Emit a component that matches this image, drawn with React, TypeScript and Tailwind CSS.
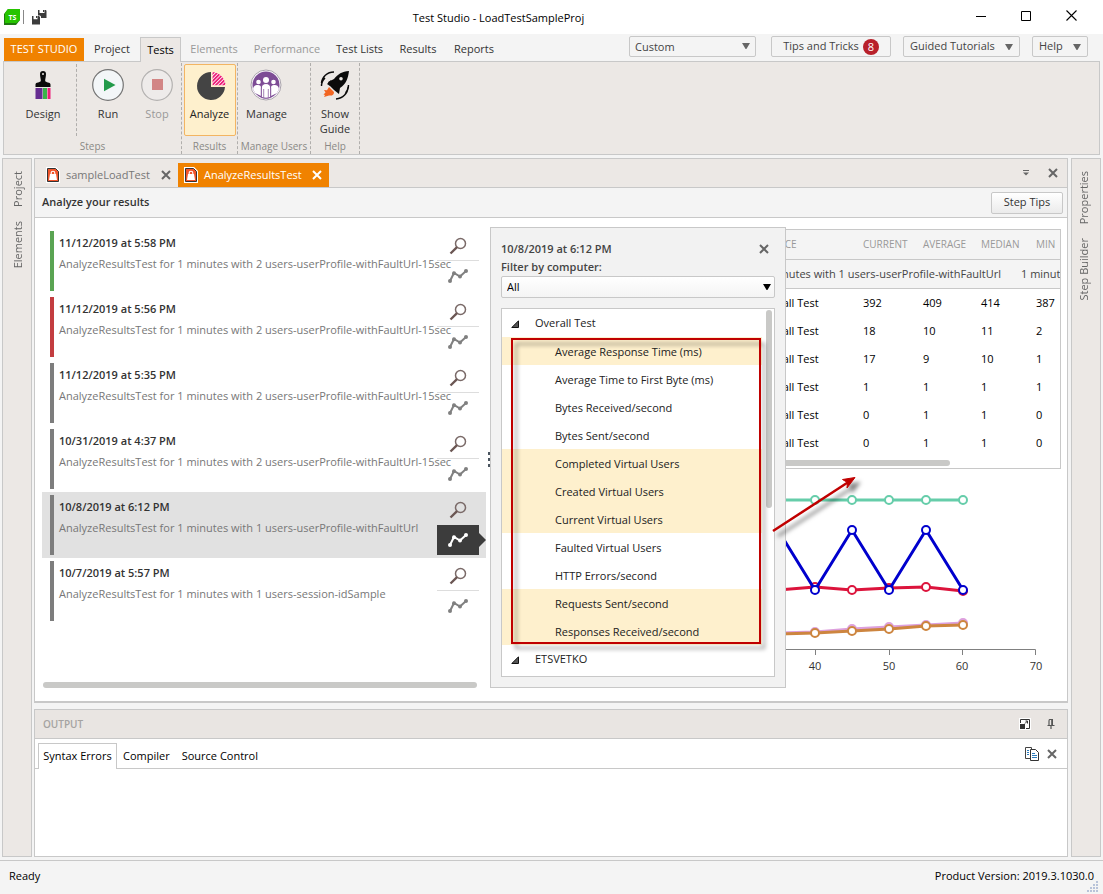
import type { ReactNode } from "react";

const runs = [
  { id: 1, date: "11/12/2019 at 5:58 PM", text: "AnalyzeResultsTest for 1 minutes with 2 users-userProfile-withFaultUrl-15sec", bar: "bg-[#5aa453]" },
  { id: 2, date: "11/12/2019 at 5:56 PM", text: "AnalyzeResultsTest for 1 minutes with 2 users-userProfile-withFaultUrl-15sec", bar: "bg-[#c33d40]" },
  { id: 3, date: "11/12/2019 at 5:35 PM", text: "AnalyzeResultsTest for 1 minutes with 2 users-userProfile-withFaultUrl-15sec", bar: "bg-[#7d7d7d]" },
  { id: 4, date: "10/31/2019 at 4:37 PM", text: "AnalyzeResultsTest for 1 minutes with 2 users-userProfile-withFaultUrl-15sec", bar: "bg-[#7d7d7d]" },
  { id: 5, date: "10/8/2019 at 6:12 PM", text: "AnalyzeResultsTest for 1 minutes with 1 users-userProfile-withFaultUrl", bar: "bg-[#7d7d7d]", selected: true },
  { id: 6, date: "10/7/2019 at 5:57 PM", text: "AnalyzeResultsTest for 1 minutes with 1 users-session-idSample", bar: "bg-[#7d7d7d]" },
];

const metrics: [string, boolean][] = [
  ["Average Response Time (ms)", true],
  ["Average Time to First Byte (ms)", false],
  ["Bytes Received/second", false],
  ["Bytes Sent/second", false],
  ["Completed Virtual Users", true],
  ["Created Virtual Users", true],
  ["Current Virtual Users", true],
  ["Faulted Virtual Users", false],
  ["HTTP Errors/second", false],
  ["Requests Sent/second", true],
  ["Responses Received/second", true],
];

const tableRows = [
  [392, 409, 414, 387],
  [18, 10, 11, 2],
  [17, 9, 10, 1],
  [1, 1, 1, 1],
  [0, 1, 1, 0],
  [0, 1, 1, 0],
];

function Down({ className = "text-[#666]" }: { className?: string }) {
  return (
    <svg width="8" height="6" viewBox="0 0 8 6" className={className} aria-hidden="true">
      <path d="M0 0h8L4.4 6h-.8z" fill="currentColor" />
    </svg>
  );
}

function Cross({ className = "text-[#666]" }: { className?: string }) {
  return (
    <svg width="10" height="10" viewBox="0 0 10 10" className={className} aria-hidden="true">
      <path d="M1 1l8 8M9 1l-8 8" stroke="currentColor" strokeWidth="2" fill="none" />
    </svg>
  );
}

function TestIcon() {
  return (
    <svg width="14" height="16" viewBox="0 0 14 16" aria-hidden="true">
      <path d="M0 0h10l4 4v12H0z" fill="#fff" />
      <path d="M1.500 1.500h8l3 3v10h-11z" fill="#f1552b" stroke="#333" />
      <path d="M4 7h6l1 6H3z" fill="#fff" />
      <path d="M5.200 7.500V6a1.800 1.800 0 013.600 0v1.500" fill="none" stroke="#fff" strokeWidth="1.100" />
    </svg>
  );
}

function LogoIcon() {
  return (
    <svg width="16" height="16" viewBox="0 0 16 16" aria-hidden="true">
      <path d="M4 0h12v11l-4 5H0V5z" fill="#1f7a10" />
      <path d="M4 0h12v11l-3.500 3H1V4z" fill="#27c400" />
      <text x="8.500" y="10.500" fontSize="7" fontWeight="700" fill="#fff" textAnchor="middle">TS</text>
    </svg>
  );
}

function SaveAllIcon() {
  return (
    <svg width="15" height="15" viewBox="0 0 15 15" fill="#3c3c3c" aria-hidden="true">
      <path d="M6 0h1.500v3h5V0H14l.5 1v7H9V6.500L8 5.500H6z" />
      <path d="M11 0h1.200v2H11z" />
      <path d="M0 6h1.500v3.200h4V6H7l1 1v7.500H0z" />
      <path d="M4 6h1.200v2H4z" />
    </svg>
  );
}

function BrushIcon() {
  return (
    <svg width="32" height="32" viewBox="0 0 32 32" className="shrink-0" aria-hidden="true">
      <path d="M16 2c2 0 3 1 3 3 0 3-1 5-.8 7 .3 1.600 5.300 1 5.300 3.500V18h-15v-2.500c0-2.500 5-1.900 5.300-3.500C14 10 13 8 13 5c0-2 1-3 3-3z" fill="#0b0b0b" />
      <circle cx="16" cy="5" r="1" fill="#eae6e3" />
      <path d="M8.500 19h7v11h-7z" fill="#662d91" />
      <path d="M16 19h4v11h-4z" fill="#39b54a" />
      <path d="M20.500 19h3v11h-3z" fill="#ed1e79" />
    </svg>
  );
}

function RunIcon() {
  return (
    <svg width="32" height="32" viewBox="0 0 32 32" className="shrink-0" aria-hidden="true">
      <circle cx="16" cy="16" r="15.300" fill="#f3f6f8" stroke="#747474" strokeWidth="1.200" />
      <path d="M12 9.700L23.500 16 12 22.300z" fill="#229a4a" />
    </svg>
  );
}

function StopIcon() {
  return (
    <svg width="32" height="32" viewBox="0 0 32 32" className="shrink-0" aria-hidden="true">
      <circle cx="16" cy="16" r="15.300" fill="#eeebea" stroke="#b3b1b0" strokeWidth="1.200" />
      <path d="M11 10h11v11H11z" fill="#d28585" />
    </svg>
  );
}

function PieIcon() {
  return (
    <svg width="32" height="32" viewBox="0 0 32 32" className="shrink-0" aria-hidden="true">
      <defs>
        <pattern id="hatch" width="2.600" height="2.600" patternUnits="userSpaceOnUse" patternTransform="rotate(45)">
          <path d="M0 0h1.800v2.600H0z" fill="#ed1e79" />
        </pattern>
      </defs>
      <path d="M17 3a14 14 0 1014 15H17z" fill="#444" />
      <path d="M18.500 3A14 14 0 0131.500 16.300H18.500z" fill="#fff" />
      <path d="M18.500 3A14 14 0 0131.500 16.300H18.500z" fill="url(#hatch)" />
    </svg>
  );
}

function UsersIcon() {
  return (
    <svg width="32" height="32" viewBox="0 0 32 32" className="shrink-0" aria-hidden="true">
      <defs>
        <clipPath id="users-disc"><circle cx="16" cy="16" r="13.500" /></clipPath>
      </defs>
      <circle cx="16" cy="16" r="15" fill="#fff" stroke="#a9a3ac" strokeWidth="1" />
      <circle cx="16" cy="16" r="13.500" fill="#7d4c95" />
      <g fill="#fff" clipPath="url(#users-disc)">
        <circle cx="8.500" cy="13" r="2.300" />
        <circle cx="23.500" cy="13" r="2.300" />
        <path d="M3 21c0-4 2-5 5-5 2 0 3 1 3 2.500V27l-6-3zM29 21c0-4-2-5-5-5-2 0-3 1-3 2.500V27l6-3z" />
      </g>
      <circle cx="16" cy="11" r="3" fill="#fff" />
      <path d="M11.300 28.300V19c0-3 2-4.500 4.700-4.500s4.700 1.500 4.700 4.500v9.300c-3 1.200-6.400 1.200-9.400 0z" fill="#fff" stroke="#7d4c95" />
      <path d="M13.700 20v9M18.300 20v9" stroke="#7d4c95" strokeWidth="0.700" />
    </svg>
  );
}

function RocketIcon() {
  return (
    <svg width="32" height="32" viewBox="0 0 32 32" className="shrink-0" aria-hidden="true">
      <path d="M15 3C8 3 3 8 2.500 14M6 9c-2 2-3.500 5-3.500 8M29 18c0 6-5 11.500-12 12M26.500 24c2-2 3-5 3-8" fill="none" stroke="#0b0b0b" strokeWidth="1.400" />
      <path d="M30 2c-1 8-3 13-9 17l-1 6-5-4-4-4-2-4 6-3C19 5 23 2.500 30 2z" fill="#0b0b0b" />
      <path d="M8 15l4-4 1 3-2 3z" fill="#0b0b0b" />
      <circle cx="22" cy="9.700" r="1.800" fill="#eae6e3" />
      <path d="M10 18l5 5c0 3-2 4-5 3.500L5 28l1-2-1.500-.5 2-2L5 21l3 .3z" fill="#f26522" />
    </svg>
  );
}

function MagnifierIcon() {
  return (
    <svg width="18" height="18" viewBox="0 0 18 18" aria-hidden="true">
      <circle cx="11.500" cy="6.500" r="5" fill="none" stroke="#7a6a68" strokeWidth="1.500" />
      <path d="M8 10.200L1.500 16.500" stroke="#6b5653" strokeWidth="2.400" />
    </svg>
  );
}

function TrendIcon() {
  return (
    <svg width="20" height="14" viewBox="0 0 20 14" aria-hidden="true">
      <path d="M2 12L6 4l6 3.500L18 2" fill="none" stroke="currentColor" strokeWidth="2" />
      <circle cx="2" cy="12" r="2" fill="currentColor" />
      <circle cx="6" cy="4.200" r="2" fill="currentColor" />
      <circle cx="12" cy="7.400" r="2" fill="currentColor" />
      <circle cx="18" cy="2" r="2" fill="currentColor" />
    </svg>
  );
}

function RibbonButton({ icon, children, state = "" }: { icon: ReactNode; children: ReactNode; state?: string }) {
  return (
    <button className={`flex flex-col items-center rounded-[2px] border pt-1 leading-[15px] ${state || "border-transparent text-[#333]"}`}>
      {icon}
      <span className="mt-[5px] text-center">{children}</span>
    </button>
  );
}

function RibbonGroup({ label, children, className }: { label: string; children: ReactNode; className: string }) {
  return (
    <section aria-label={label} className={`flex shrink-0 flex-col border-r border-dashed border-[#b0aeac] ${className}`}>
      <div className="flex h-[74px] py-px">{children}</div>
      <div className="mt-[2px] text-center text-[10px] leading-[14px] whitespace-nowrap text-[#8a8886]">{label}</div>
    </section>
  );
}

function RunItem({ run }: { run: (typeof runs)[number] }) {
  return (
    <li className={`relative flex h-[66px] py-[3px] pr-[7px] pl-2 ${run.selected ? "bg-[#e1e1e1]" : ""}`}>
      <div className={`w-1 shrink-0 ${run.bar}`} />
      <div className="min-w-0 flex-1 pt-[5px] pl-[5px] whitespace-nowrap">
        <h3 className="leading-[14px] font-semibold text-[#333]">{run.date}</h3>
        <p className="mt-[7px] leading-[14px] text-[#777]">{run.text}</p>
      </div>
      <div className="flex w-[42px] shrink-0 flex-col">
        <button aria-label="Inspect" className="flex h-[29px] items-center justify-center">
          <MagnifierIcon />
        </button>
        <button
          aria-label="Chart"
          className={`flex items-center justify-center ${run.selected ? "mt-px h-[30px] bg-[#3c3c3c] text-white" : "h-[31px] border-t border-[#ddd] text-[#808080]"}`}
        >
          <TrendIcon />
        </button>
      </div>
      {run.selected && (
        <svg width="7" height="14" viewBox="0 0 7 14" className="absolute right-0 bottom-[11px]" aria-hidden="true">
          <path d="M0 0l7 7-7 7z" fill="#3c3c3c" />
        </svg>
      )}
    </li>
  );
}

function Series({ points, color }: { points: [number, number][]; color: string }) {
  return (
    <g stroke={color}>
      <polyline points={points.map((p) => p.join(",")).join(" ")} fill="none" strokeWidth="3" />
      {points.map(([x, y]) => (
        <circle key={x} cx={x} cy={y} r="4" fill="#fff" strokeWidth="2" />
      ))}
    </g>
  );
}

function Chart() {
  return (
    <svg width="570" height="200" viewBox="490 480 570 200" className="shrink-0 self-end" role="img" aria-label="Performance chart">
      <Series color="#66cdaa" points={[[777, 500], [814, 500], [851, 500], [888, 500], [925, 500], [962, 500]]} />
      <Series color="#dc143c" points={[[777, 590], [814, 587], [851, 590], [888, 588], [925, 587], [962, 591]]} />
      <Series color="#0000cd" points={[[777, 530], [814, 590], [851, 530], [888, 590], [925, 530], [962, 590]]} />
      <Series color="#dda0dd" points={[[777, 633], [814, 632], [851, 629], [888, 627], [925, 625], [962, 623]]} />
      <Series color="#cd853f" points={[[777, 634], [814, 633], [851, 631], [888, 629], [925, 626], [962, 625]]} />
      <path d="M520 649.500H1034.500V655M814.500 649.500V655M888.500 649.500V655M961.500 649.500V655" fill="none" stroke="#808080" />
      <g fontSize="11" fill="#333" textAnchor="middle">
        <text x="814" y="670">40</text>
        <text x="888" y="670">50</text>
        <text x="961" y="670">60</text>
        <text x="1035" y="670">70</text>
      </g>
    </svg>
  );
}

function ResultsTable() {
  return (
    <div className="ml-[7px] overflow-hidden border border-[#c8c8c8] bg-white">
      <table className="w-full table-fixed border-collapse text-left whitespace-nowrap">
        <colgroup>
          <col />
          <col className="w-[105px]" />
          <col className="w-[60px]" />
          <col className="w-[58px]" />
          <col className="w-[55px]" />
          <col className="w-[24px]" />
        </colgroup>
        <thead>
          <tr className="h-[29px] border-b border-[#c8c8c8] bg-[#f4f4f4] text-[10px] text-[#999]">
            <th className="font-normal" />
            {["SOURCE", "CURRENT", "AVERAGE", "MEDIAN", "MIN"].map((h) => (
              <th key={h} className="font-normal">{h}</th>
            ))}
          </tr>
        </thead>
        <tbody>
          <tr className="h-[29px] border-b border-[#c8c8c8] bg-[#f4f4f4] text-[#444]">
            <td colSpan={6} className="pt-[2px]">
              <div className="flex justify-end gap-5 overflow-hidden">
                <span>AnalyzeResultsTest for 1 minutes with 1 users-userProfile-withFaultUrl</span>
                <span className="w-[39px]">1 minutes</span>
              </div>
            </td>
          </tr>
          {tableRows.map((row, i) => (
            <tr key={i} className="h-7 text-black">
              <td />
              <td className="pt-[2px]">Overall Test</td>
              {row.map((value, j) => (
                <td key={j} className="pt-[2px]">{value}</td>
              ))}
            </tr>
          ))}
        </tbody>
      </table>
      <div className="mt-1 mb-[2px] h-[6px] w-[452px] rounded-full bg-[#c9c9c7]" />
    </div>
  );
}

function TreeNode({ label }: { label: string }) {
  return (
    <button className="flex h-7 w-full items-center gap-4 pt-px pl-[9px] text-left">
      <svg width="8" height="8" viewBox="0 0 8 8" aria-hidden="true">
        <path d="M7.500.8v6.700H.8z" fill="#555" stroke="#111" />
      </svg>
      {label}
    </button>
  );
}

function FilterPanel() {
  return (
    <div className="absolute top-[9px] left-0 w-[296px] border border-[#c8c8c8] bg-[#f2f2f2] px-[10px] pt-[13px] pb-[10px]">
      <div className="flex items-center justify-between pr-[6px]">
        <h2 className="leading-[16px] font-semibold text-[#444]">10/8/2019 at 6:12 PM</h2>
        <button aria-label="Close filter"><Cross /></button>
      </div>
      <label htmlFor="computer" className="mt-[2px] block leading-[16px] font-semibold text-[#444]">Filter by computer:</label>
      <div className="relative mt-px">
        <select id="computer" className="block h-[22px] w-full appearance-none rounded-[2px] border border-[#c8c8c8] bg-linear-to-b from-[#fff] to-[#f4f4f4] px-[5px] text-black">
          <option>All</option>
        </select>
        <Down className="pointer-events-none absolute top-2 right-1 text-black" />
      </div>
      <div className="relative mt-[10px] h-[369px] border border-[#c8c8c8] bg-white text-[#222]">
        <TreeNode label="Overall Test" />
        <ul>
          {metrics.map(([name, on]) => (
            <li key={name}>
              <button aria-pressed={on} className={`block h-7 w-[260px] pt-[2px] pl-[53px] text-left ${on ? "bg-[#fef0cd]" : ""}`}>{name}</button>
            </li>
          ))}
        </ul>
        <TreeNode label="ETSVETKO" />
        <div className="absolute top-px right-[2px] h-[198px] w-[6px] rounded-full bg-[#c9c9c7]" />
        <div className="pointer-events-none absolute top-[29px] left-[9px] h-[306px] w-[250px] border-2 border-[#c00000] drop-shadow-[4px_5px_2px_rgba(0,0,0,0.4)]" />
      </div>
      <svg width="100" height="80" viewBox="0 0 100 80" className="pointer-events-none absolute top-[242px] left-[277px] z-10 drop-shadow-[5px_5px_2px_rgba(0,0,0,0.5)]" aria-hidden="true">
        <path d="M5 61L82 11" stroke="#c00000" strokeWidth="2.500" />
        <path d="M87 7.500L74.500 9.500l5 3-.5 5.500z" fill="#c00000" stroke="#c00000" strokeLinejoin="round" />
      </svg>
    </div>
  );
}

function SideBar({ items, label, className }: { items: string[]; label: string; className: string }) {
  return (
    <nav aria-label={label} className={`flex w-[30px] shrink-0 flex-col items-center gap-[14px] border border-[#c8c8c8] bg-[#ece8e5] pt-3 text-[#666] ${className}`}>
      {items.map((item) => (
        <button key={item} className="rotate-180 leading-[16px] [writing-mode:vertical-rl]">{item}</button>
      ))}
    </nav>
  );
}

export default function App() {
  return (
    <div className="flex min-h-screen flex-col bg-[#f4f4f4] font-['Open_Sans','Noto_Sans',sans-serif] text-[11px] text-[#333]">
      <header className="grid h-[34px] shrink-0 grid-cols-3 items-center bg-white">
        <div className="flex items-center pl-1">
          <LogoIcon />
          <div className="mr-2 ml-[3px] h-[14px] w-px bg-[#888]" />
          <button aria-label="Save all"><SaveAllIcon /></button>
        </div>
        <h1 className="pt-[2px] pr-[106px] text-center whitespace-nowrap text-black">Test Studio - LoadTestSampleProj</h1>
        <div className="flex items-center justify-end gap-[35px] pr-[26px] pb-[3px]">
          <button aria-label="Minimize">
            <svg width="10" height="10" viewBox="0 0 10 10"><path d="M0 5.500h10" stroke="#000" /></svg>
          </button>
          <button aria-label="Maximize">
            <svg width="10" height="10" viewBox="0 0 10 10"><path d="M.5.5h9v9h-9z" fill="none" stroke="#000" /></svg>
          </button>
          <button aria-label="Close">
            <svg width="11" height="11" viewBox="0 0 11 11"><path d="M.5.5l10 10M10.500.5l-10 10" stroke="#000" strokeWidth="1.100" /></svg>
          </button>
        </div>
      </header>

      <div className="flex h-[27px] shrink-0 items-end pl-1">
        <nav aria-label="Ribbon tabs" className="flex items-end whitespace-nowrap">
          <button className="h-[23px] w-20 bg-[#f08200] text-white">TEST STUDIO</button>
          <button className="h-[23px] w-14">Project</button>
          <button className="relative z-10 -mb-px h-[25px] w-[41px] border border-b-0 border-[#c8c8c8] bg-[#ece8e5] font-medium text-black">Tests</button>
          <button className="h-[23px] w-[66px] text-[#999]">Elements</button>
          <button className="h-[23px] w-[80px] text-[#999]">Performance</button>
          <button className="h-[23px] w-[65px]">Test Lists</button>
          <button className="h-[23px] w-[52px]">Results</button>
          <button className="h-[23px] w-[60px]">Reports</button>
        </nav>
        <div className="mb-1 ml-auto flex h-[21px] items-stretch gap-3 pr-[15px] text-[#444]">
          <div className="relative mr-[3px]">
            <select aria-label="Layout" className="h-full w-[127px] appearance-none rounded-[2px] border border-[#c8c8c8] bg-[#f4f4f4] px-[5px] pt-px">
              <option>Custom</option>
            </select>
            <Down className="pointer-events-none absolute top-[7px] right-[6px] text-[#666]" />
          </div>
          <button className="flex w-[120px] items-center justify-center gap-1 rounded-[2px] border border-[#c8c8c8]">
            Tips and Tricks
            <span className="flex size-4 items-center justify-center rounded-full bg-[#b8202a] leading-none text-white">8</span>
          </button>
          <button className="flex w-[117px] items-center justify-between rounded-[2px] border border-[#c8c8c8] px-[6px]">
            Guided Tutorials <Down />
          </button>
          <button className="flex w-[56px] items-center justify-between rounded-[2px] border border-[#c8c8c8] px-[6px]">
            Help <Down />
          </button>
        </div>
      </div>

      <div className="mr-[3px] ml-[3px] flex h-[94px] shrink-0 border border-[#c8c8c8] bg-[#ece8e5] pt-px">
        <RibbonGroup label="Steps" className="w-[178px]">
          <div className="flex w-[73px] justify-center border-r border-dashed border-[#b0aeac] pl-[6px]">
            <RibbonButton icon={<BrushIcon />}>Design</RibbonButton>
          </div>
          <div className="flex flex-1 justify-between pr-[7px] pl-[14px]">
            <RibbonButton icon={<RunIcon />}>Run</RibbonButton>
            <RibbonButton icon={<StopIcon />} state="border-transparent text-[#999]">Stop</RibbonButton>
          </div>
        </RibbonGroup>
        <RibbonGroup label="Results" className="w-[56px] items-center">
          <RibbonButton icon={<PieIcon />} state="w-[52px] border-[#f3b562] bg-[#fef0cd] text-[#222]">Analyze</RibbonButton>
        </RibbonGroup>
        <RibbonGroup label="Manage Users" className="w-[73px]">
          <div className="flex w-[57px] justify-center"><RibbonButton icon={<UsersIcon />}>Manage</RibbonButton></div>
        </RibbonGroup>
        <RibbonGroup label="Help" className="w-[49px] items-center">
          <RibbonButton icon={<RocketIcon />}>Show<br />Guide</RibbonButton>
        </RibbonGroup>
      </div>

      <div className="mt-[3px] flex flex-1 gap-[2px] px-[2px]">
        <SideBar label="Left panes" items={["Project", "Elements"]} className="pl-[2px]" />

        <div className="mr-px flex min-w-0 flex-1 flex-col gap-[6px]">
          <main className="flex flex-1 flex-col border border-b-2 border-[#c8c8c8] bg-white">
            <div className="flex h-[29px] shrink-0 items-end border-b border-[#c8c8c8] bg-[#ece8e5]">
              <div className="flex h-6 w-[143px] items-center pl-[11px] text-[#777]">
                <TestIcon />
                <button className="ml-[6px] pt-px">sampleLoadTest</button>
                <button aria-label="Close sampleLoadTest" className="ml-auto pr-[7px]"><Cross /></button>
              </div>
              <div className="flex h-6 w-[151px] items-center bg-[#f08200] pl-[6px] text-white">
                <TestIcon />
                <button className="ml-[6px] pt-px">AnalyzeResultsTest</button>
                <button aria-label="Close AnalyzeResultsTest" className="ml-auto pr-[7px]"><Cross className="text-white" /></button>
              </div>
              <div className="ml-auto flex h-[28px] items-center gap-[19px] pr-[9px]">
                <button aria-label="Tab list">
                  <svg width="6" height="6" viewBox="0 0 6 6"><path d="M0 .5h6" stroke="#666" /><path d="M0 2.500h6L3 5.500z" fill="#666" /></svg>
                </button>
                <button aria-label="Close tab"><Cross /></button>
              </div>
            </div>

            <div className="flex h-[30px] shrink-0 items-center justify-between border-b border-[#c8c8c8] bg-[#f4f4f4] pr-1 pl-[7px]">
              <h2 className="font-semibold text-[#333]">Analyze your results</h2>
              <button className="h-[22px] w-[72px] rounded-[2px] border border-[#c8c8c8] bg-linear-to-b from-[#fff] to-[#ebebeb]">Step Tips</button>
            </div>

            <div className="flex flex-1">
              <section aria-label="Test runs" className="flex w-[451px] shrink-0 flex-col pt-[10px] pb-[13px] pl-[7px]">
                <ul>
                  {runs.map((run) => (
                    <RunItem key={run.id} run={run} />
                  ))}
                </ul>
                <div className="mt-auto mr-[9px] ml-px h-[6px] rounded-full bg-[#c9c9c7]" />
              </section>
              <div className="flex w-1 shrink-0 flex-col justify-center gap-[3px] pl-[2px]">
                <i className="h-[3px] w-[2px] bg-[#4a5560]" />
                <i className="h-[3px] w-[2px] bg-[#4a5560]" />
                <i className="h-[3px] w-[2px] bg-[#4a5560]" />
              </div>
              <section aria-label="Results" className="relative flex min-w-0 flex-1 flex-col gap-[11px] pt-[11px] pr-[6px]">
                <ResultsTable />
                <Chart />
                <FilterPanel />
              </section>
            </div>
          </main>

          <section aria-label="Output" className="flex h-[148px] shrink-0 flex-col border border-[#c8c8c8] bg-white">
            <div className="flex h-[29px] shrink-0 items-center justify-between border-b border-[#c8c8c8] bg-[#e9e5e2] pr-3 pl-2">
              <h2 className="text-[10px] font-semibold text-[#a5a3a1]">OUTPUT</h2>
              <div className="flex items-center gap-4">
                <button aria-label="Float">
                  <svg width="12" height="12" viewBox="0 0 12 12">
                    <path d="M0 0h12v12H0z" fill="#fff" />
                    <path d="M1.500 5V1.500h9v9H7" fill="none" stroke="#333" />
                    <path d="M1 6h5v5H1z" fill="#333" />
                    <path d="M6 5.500L8.500 3M6.500 3h2v2.500" fill="none" stroke="#333" />
                  </svg>
                </button>
                <button aria-label="Pin">
                  <svg width="8" height="10" viewBox="0 0 8 10">
                    <path d="M2 6V2q0-1.500 1-1.500h2V6M.5 6.500h7M4 6.500V10" fill="none" stroke="#555" strokeWidth="1.200" />
                    <path d="M4.500 0H6v6H4.500z" fill="#555" />
                  </svg>
                </button>
              </div>
            </div>
            <div className="flex h-[30px] shrink-0 items-end border-b border-[#c8c8c8] pl-[3px] text-black">
              <button className="-mb-px h-[26px] w-[79px] border border-b-0 border-[#c8c8c8] bg-white whitespace-nowrap">Syntax Errors</button>
              <button className="h-6 pl-[6px]">Compiler</button>
              <button className="h-6 pl-3">Source Control</button>
              <div className="mr-[10px] mb-[7px] ml-auto flex items-center gap-2">
                <button aria-label="Copy">
                  <svg width="14" height="14" viewBox="0 0 14 14">
                    <path d="M5 11.500H.5V.5h6v2" fill="#fff" stroke="#444" />
                    <path d="M2 3.500h2M2 5.500h2M2 7.500h2" stroke="#2b7bbb" />
                    <path d="M5.500 2.500h5l3 3v8h-8z" fill="#fff" stroke="#333" />
                    <path d="M7 6.500h3M7 8.500h5M7 10.500h5" stroke="#2b7bbb" />
                  </svg>
                </button>
                <button aria-label="Clear"><Cross /></button>
              </div>
            </div>
          </section>
        </div>

        <SideBar label="Right panes" items={["Properties", "Step Builder"]} className="pr-1" />
      </div>

      <footer className="relative mt-[3px] flex h-[34px] shrink-0 items-center justify-between border-t border-[#c8c8c8] pr-[9px] pb-[3px] pl-[9px] text-black">
        <span>Ready</span>
        <span>Product Version: 2019.3.1030.0</span>
        <svg width="11" height="11" viewBox="0 0 11 11" className="absolute right-[5px] bottom-[2px]" aria-hidden="true">
          <path d="M9 0h2v2H9zM9 3h2v2H9zM6 3h2v2H6zM9 6h2v2H9zM6 6h2v2H6zM3 6h2v2H3zM9 9h2v2H9zM6 9h2v2H6zM3 9h2v2H3zM0 9h2v2H0z" fill="#b8c3d9" />
        </svg>
      </footer>
    </div>
  );
}
